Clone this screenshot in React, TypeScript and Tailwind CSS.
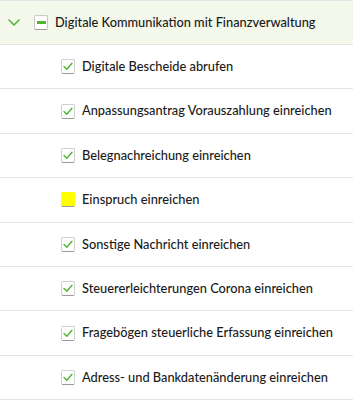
import React from "react";

const items: { label: string; checked: boolean }[] = [
  { label: "Digitale Bescheide abrufen", checked: true },
  { label: "Anpassungsantrag Vorauszahlung einreichen", checked: true },
  { label: "Belegnachreichung einreichen", checked: true },
  { label: "Einspruch einreichen", checked: false },
  { label: "Sonstige Nachricht einreichen", checked: true },
  { label: "Steuererleichterungen Corona einreichen", checked: true },
  { label: "Fragebögen steuerliche Erfassung einreichen", checked: true },
  { label: "Adress- und Bankdatenänderung einreichen", checked: true },
];

function Check() {
  return (
    <svg width="10" height="9" viewBox="0 0 10 9" fill="none">
      <path d="M1 4.5 L3.8 7.3 L9 1.3" stroke="#4fb431" strokeWidth="1.4" strokeLinecap="round" strokeLinejoin="round" />
    </svg>
  );
}

export default function App() {
  return (
    <div className="w-[353px] h-[400px] overflow-hidden bg-white text-[12.8px] text-[#1a1a1a]" style={{ fontFamily: 'Lato, "Noto Sans", sans-serif' }}>
      <div className="h-[45px] border-t border-b border-[#e4e4e4] bg-[#f3f8eb] flex items-center">
        <svg className="ml-[8px]" width="12" height="7" viewBox="0 0 12 7" fill="none">
          <path d="M1 1 L6 6 L11 1" stroke="#4fb431" strokeWidth="1.5" strokeLinecap="round" strokeLinejoin="round" />
        </svg>
        <div className="ml-[14px] w-[14px] h-[15px] rounded-[2px] border border-[#c8c8c8] border-b-[#9a9a9a] bg-white flex items-center justify-center">
          <div className="w-[9px] h-[3px] bg-[#4fb431]" />
        </div>
        <span className="ml-[7px] whitespace-nowrap font-medium">Digitale Kommunikation mit Finanzverwaltung</span>
      </div>
      {items.map((it) => (
        <div key={it.label} className="h-[44.4px] border-b border-[#e4e4e4] flex items-center">
          {it.checked ? (
            <div className="ml-[61px] w-[14px] h-[15px] rounded-[2px] border border-[#d0d0d0] border-b-[#9a9a9a] bg-white flex items-center justify-center">
              <Check />
            </div>
          ) : (
            <div className="ml-[61px] w-[14px] h-[15px] rounded-[2px] border-b border-[#9a9a9a] bg-[#ffff00]" />
          )}
          <span className="ml-[7px] whitespace-nowrap font-medium">{it.label}</span>
        </div>
      ))}
    </div>
  );
}
